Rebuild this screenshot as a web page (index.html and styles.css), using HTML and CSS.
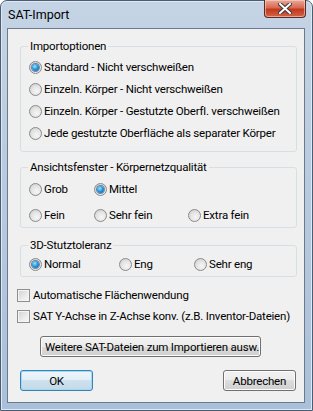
FILE: index.html
```html
<!DOCTYPE html>
<html lang="de">
<head>
    <meta charset="UTF-8">
    <title>SAT-Import</title>
    <link rel="stylesheet" href="styles.css">
</head>
<body>
    <div class="window">
        <div class="titlebar">
            <span class="title">SAT-Import</span>
            <button class="close" title="Schließen">
                <svg width="14" height="11" viewBox="0 0 14 11">
                    <path d="M2 1 L12 10 M12 1 L2 10" stroke="#3b3b3b" stroke-width="4" stroke-linecap="square"/>
                    <path d="M2 1 L12 10 M12 1 L2 10" stroke="#fff" stroke-width="2" stroke-linecap="square"/>
                </svg>
            </button>
        </div>

        <div class="client">
            <fieldset class="group group-import">
                <legend>Importoptionen</legend>
                <label class="opt"><span class="radio checked"></span>Standard - Nicht verschweißen</label>
                <label class="opt"><span class="radio"></span>Einzeln. Körper - Nicht verschweißen</label>
                <label class="opt"><span class="radio"></span>Einzeln. Körper - Gestutzte Oberfl. verschweißen</label>
                <label class="opt"><span class="radio"></span>Jede gestutzte Oberfläche als separater Körper</label>
            </fieldset>

            <fieldset class="group group-mesh">
                <legend>Ansichtsfenster - Körpernetzqualität</legend>
                <div class="grid3 mesh-grid">
                    <label class="opt"><span class="radio"></span>Grob</label>
                    <label class="opt"><span class="radio checked"></span>Mittel</label>
                    <span></span>
                    <label class="opt"><span class="radio"></span>Fein</label>
                    <label class="opt"><span class="radio"></span>Sehr fein</label>
                    <label class="opt"><span class="radio"></span>Extra fein</label>
                </div>
            </fieldset>

            <fieldset class="group group-tol">
                <legend>3D-Stutztoleranz</legend>
                <div class="grid3 tol-grid">
                    <label class="opt"><span class="radio checked"></span>Normal</label>
                    <label class="opt"><span class="radio"></span>Eng</label>
                    <label class="opt"><span class="radio"></span>Sehr eng</label>
                </div>
            </fieldset>

            <div class="checks">
                <label class="opt"><span class="check"></span>Automatische Flächenwendung</label>
                <label class="opt"><span class="check"></span>SAT Y-Achse in Z-Achse konv. (z.B. Inventor-Dateien)</label>
            </div>

            <button class="btn btn-more">Weitere SAT-Dateien zum Importieren ausw.</button>

            <div class="actions">
                <button class="btn btn-default">OK</button>
                <button class="btn">Abbrechen</button>
            </div>
        </div>
    </div>
</body>
</html>
```

FILE: styles.css
```css
html, body {
    margin: 0;
    padding: 0;
    width: 313px;
    height: 411px;
    overflow: hidden;
    background: #fff;
}
body {
    font-family: Roboto, "Liberation Sans", Arial, sans-serif;
    font-size: 11.5px;
    letter-spacing: -0.2px;
    color: #000;
}
.window {
    box-sizing: border-box;
    width: 313px;
    height: 411px;
    display: flex;
    flex-direction: column;
    border: 1px solid #4b5d71;
    border-radius: 7px 7px 0 0;
    background: linear-gradient(to bottom, #c4d4e5 0, #b9cbe0 40%, #a9c0da 100%);
    box-shadow: inset 0 0 0 1px #dfe8f2;
}
.titlebar {
    height: 27px;
    display: flex;
    justify-content: space-between;
    align-items: flex-start;
    padding: 0 6px 0 7px;
}
.title {
    font-size: 12.5px;
    letter-spacing: 0;
    line-height: 28px;
    color: #000;
}
.close {
    width: 42px;
    height: 18px;
    margin-top: -1px;
    padding: 0;
    display: flex;
    align-items: center;
    justify-content: center;
    border: 1px solid #5b2a22;
    border-top: none;
    border-radius: 0 0 4px 4px;
    background: linear-gradient(to bottom, #e9a99b 0, #d86a50 45%, #c2391b 55%, #d2634a 100%);
    box-shadow: inset 0 0 0 1px rgba(255, 220, 210, 0.55);
}
.client {
    flex: 1;
    margin: 0 7px 7px 6px;
    border: 1px solid #6c7a8a;
    background: #f0f0f0;
    padding: 10px 0 0;
    display: flex;
    flex-direction: column;
}

/* group boxes */
.group {
    margin: 0 7px 0 12px;
    padding: 0 8px;
    border: 1px solid #d5dfe5;
    border-radius: 3px;
    min-width: 0;
}
.group legend {
    padding: 0 2px;
    margin-left: -1px;
    line-height: 14px;
    color: #000;
}
.group-import {
    padding-top: 3px;
    padding-bottom: 7px;
}
.group-import .opt {
    height: 22px;
}
.group-mesh {
    margin-top: 8px;
    padding-top: 4px;
    padding-bottom: 1px;
}
.group-tol {
    margin-top: 10px;
    padding-top: 2px;
    padding-bottom: 2px;
}
.grid3 {
    display: grid;
}
.mesh-grid {
    grid-template-columns: 65px 94px 1fr;
    grid-auto-rows: 22px;
    row-gap: 4px;
}
.tol-grid {
    grid-template-columns: 90px 75px 1fr;
    grid-auto-rows: 20px;
}

/* radio / checkbox rows */
.opt {
    display: flex;
    align-items: center;
    gap: 2px;
    white-space: nowrap;
}
.radio {
    box-sizing: border-box;
    width: 13px;
    height: 13px;
    flex: none;
    border: 1px solid #8a8a8a;
    border-radius: 50%;
    background: radial-gradient(circle at 60% 65%, #f6f6f6 0, #e6e6e6 45%, #c8c8c8 100%);
    display: flex;
    align-items: center;
    justify-content: center;
}
.radio.checked::after {
    content: "";
    width: 7px;
    height: 7px;
    border-radius: 50%;
    background: radial-gradient(circle at 40% 35%, #9fe3ff 0, #2a9bd8 45%, #0b4f8c 100%);
    box-shadow: 0 0 0 1px rgba(21, 66, 139, 0.6);
}
.checks {
    margin: 8px 0 0 9px;
    display: flex;
    flex-direction: column;
    gap: 1px;
}
.checks .opt {
    height: 20px;
    gap: 3px;
}
.check {
    box-sizing: border-box;
    width: 13px;
    height: 13px;
    flex: none;
    border: 1px solid #8f8f8f;
    background: linear-gradient(135deg, #d0d0d0 0, #ececec 60%, #f8f8f8 100%);
    box-shadow: inset 0 0 0 1px #f4f4f4;
}

/* buttons */
.btn {
    font-family: inherit;
    font-size: 11.5px;
    letter-spacing: inherit;
    white-space: nowrap;
    color: #000;
    height: 21px;
    padding: 0 4px;
    border: 1px solid #707070;
    border-radius: 3px;
    background: linear-gradient(to bottom, #f2f2f2 0, #ebebeb 50%, #dddddd 50%, #cfcfcf 100%);
    box-shadow: inset 0 0 0 1px #fcfcfc;
}
.btn-more {
    align-self: flex-start;
    width: 221px;
    margin: 10px 0 0 32px;
}
.actions {
    display: flex;
    justify-content: space-between;
    margin: 13px 8px 0 12px;
}
.actions .btn {
    width: 73px;
}
.btn-default {
    border-color: #3c7fb1;
    background: linear-gradient(to bottom, #eef6fb 0, #e2eef6 50%, #cfe1ee 50%, #c4d8e7 100%);
    box-shadow: inset 0 0 0 1px #9ddcf7;
}
```
